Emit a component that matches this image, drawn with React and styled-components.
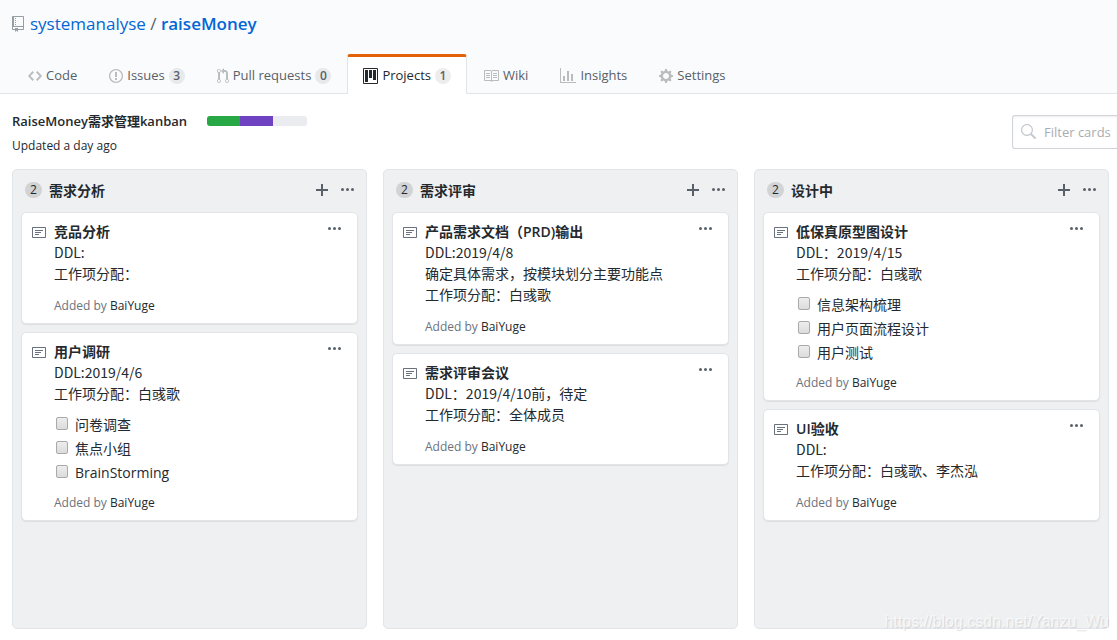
import React, { useState } from 'react';
import styled, { createGlobalStyle } from 'styled-components';

const icons = {
  repo: { width: 12, path: 'M4 9H3V8h1v1zm0-3H3v1h1V6zm0-2H3v1h1V4zm0-2H3v1h1V2zm8-1v12c0 .55-.45 1-1 1H6v2l-1.5-1.5L3 16v-2H1c-.55 0-1-.45-1-1V1c0-.55.45-1 1-1h10c.55 0 1 .45 1 1zm-1 10H1v2h2v-1h3v1h5v-2zm0-10H2v9h9V1z' },
  code: { width: 14, path: 'M9.5 3L8 4.5 11.5 8 8 11.5 9.5 13 14 8 9.5 3zm-5 0L0 8l4.5 5L6 11.5 2.5 8 6 4.5 4.5 3z' },
  issue: { width: 14, path: 'M7 2.3c3.14 0 5.7 2.56 5.7 5.7s-2.56 5.7-5.7 5.7A5.71 5.71 0 0 1 1.3 8c0-3.14 2.56-5.7 5.7-5.7zM7 1C3.14 1 0 4.14 0 8s3.14 7 7 7 7-3.14 7-7-3.14-7-7-7zm1 3H6v5h2V4zm0 6H6v2h2v-2z' },
  pull: { width: 12, path: 'M11 11.28V5c-.03-.78-.34-1.47-.94-2.06C9.46 2.35 8.78 2.03 8 2H7V0L4 3l3 3V4h1c.27.02.48.11.69.31.21.2.3.42.31.69v6.28A1.993 1.993 0 0 0 10 15a1.993 1.993 0 0 0 1-3.72zm-1 2.92c-.66 0-1.2-.55-1.2-1.2 0-.65.55-1.2 1.2-1.2.65 0 1.2.55 1.2 1.2 0 .65-.55 1.2-1.2 1.2zM4 3c0-1.11-.89-2-2-2a1.993 1.993 0 0 0-1 3.72v6.56A1.993 1.993 0 0 0 2 15a1.993 1.993 0 0 0 1-3.72V4.72c.59-.34 1-.98 1-1.72zm-.8 10c0 .66-.55 1.2-1.2 1.2-.65 0-1.2-.55-1.2-1.2 0-.65.55-1.2 1.2-1.2.65 0 1.2.55 1.2 1.2zM2 4.2C1.34 4.2.8 3.65.8 3c0-.65.55-1.2 1.2-1.2.65 0 1.2.55 1.2 1.2 0 .65-.55 1.2-1.2 1.2z' },
  project: { width: 15, path: 'M10 12h3V2h-3v10zm-4-2h3V2H6v8zm-4 4h3V2H2v12zm-1 1h13V1H1v14zM14 0H1a1 1 0 0 0-1 1v14a1 1 0 0 0 1 1h13a1 1 0 0 0 1-1V1a1 1 0 0 0-1-1z' },
  book: { width: 16, path: 'M3 5h4v1H3V5zm0 3h4V7H3v1zm0 2h4V9H3v1zm11-5h-4v1h4V5zm0 2h-4v1h4V7zm0 2h-4v1h4V9zm2-6v9c0 .55-.45 1-1 1H9.5l-1 1-1-1H2c-.55 0-1-.45-1-1V3c0-.55.45-1 1-1h5.5l1 1 1-1H15c.55 0 1 .45 1 1zm-8 .5L7.5 3H2v9h6V3.5zm7-.5H9.5l-.5.5V12h6V3z' },
  graph: { width: 16, path: 'M16 14v1H0V0h1v14h15zM5 13H3V8h2v5zm4 0H7V3h2v10zm4 0h-2V6h2v7z' },
  gear: { width: 14, path: 'M14 8.77v-1.6l-1.94-.64-.45-1.09.88-1.84-1.13-1.13-1.81.91-1.09-.45-.69-1.92h-1.6l-.63 1.94-1.11.45-1.84-.88-1.13 1.13.91 1.81-.45 1.09L0 7.23v1.59l1.94.64.45 1.09-.88 1.84 1.13 1.13 1.81-.91 1.09.45.69 1.92h1.59l.63-1.94 1.11-.45 1.84.88 1.13-1.13-.92-1.81.47-1.09L14 8.75v.02zM7 11c-1.66 0-3-1.34-3-3s1.34-3 3-3 3 1.34 3 3-1.34 3-3 3z' },
  plus: { width: 12, path: 'M12 9H7v5H5V9H0V7h5V2h2v5h5v2z' },
  dots: { width: 13, path: 'M1.5 9a1.5 1.5 0 1 0 0-3 1.5 1.5 0 0 0 0 3zm5 0a1.5 1.5 0 1 0 0-3 1.5 1.5 0 0 0 0 3zM13 7.5a1.5 1.5 0 1 1-3 0 1.5 1.5 0 0 1 3 0z' },
  note: { width: 14, path: 'M3 10h4V9H3v1zm0-2h6V7H3v1zm0-2h8V5H3v1zm10 6H1V3h12v9zM1 2c-.55 0-1 .45-1 1v9c0 .55.45 1 1 1h12c.55 0 1-.45 1-1V3c0-.55-.45-1-1-1H1z' },
  search: { width: 16, path: 'M15.7 13.3l-3.81-3.83A5.93 5.93 0 0 0 13 6c0-3.31-2.69-6-6-6S1 2.69 1 6s2.69 6 6 6c1.3 0 2.48-.41 3.47-1.11l3.83 3.81c.19.2.45.3.7.3.25 0 .52-.09.7-.3a.996.996 0 0 0 0-1.41v.01zM7 10.7c-2.59 0-4.7-2.11-4.7-4.7 0-2.59 2.11-4.7 4.7-4.7 2.59 0 4.7 2.11 4.7 4.7 0 2.59-2.11 4.7-4.7 4.7z' },
};

const Icon = ({ name }) => (
  <IconSvg width={icons[name].width} height="16" viewBox={`0 0 ${icons[name].width} 16`} aria-hidden="true">
    <path fillRule="evenodd" d={icons[name].path} />
  </IconSvg>
);

const tabs = [
  { icon: 'code', label: 'Code' },
  { icon: 'issue', label: 'Issues', count: 3 },
  { icon: 'pull', label: 'Pull requests', count: 0 },
  { icon: 'project', label: 'Projects', count: 1, active: true },
  { icon: 'book', label: 'Wiki' },
  { icon: 'graph', label: 'Insights' },
  { icon: 'gear', label: 'Settings' },
];

const columns = [
  {
    title: '需求分析',
    cards: [
      { title: '竞品分析', lines: ['DDL:', '工作项分配：'] },
      {
        title: '用户调研',
        lines: ['DDL:2019/4/6', '工作项分配：白彧歌'],
        tasks: ['问卷调查', '焦点小组', 'BrainStorming'],
      },
    ],
  },
  {
    title: '需求评审',
    cards: [
      {
        title: '产品需求文档（PRD)输出',
        lines: ['DDL:2019/4/8', '确定具体需求，按模块划分主要功能点', '工作项分配：白彧歌'],
      },
      { title: '需求评审会议', lines: ['DDL：2019/4/10前，待定', '工作项分配：全体成员'] },
    ],
  },
  {
    title: '设计中',
    cards: [
      {
        title: '低保真原型图设计',
        lines: ['DDL：2019/4/15', '工作项分配：白彧歌'],
        tasks: ['信息架构梳理', '用户页面流程设计', '用户测试'],
      },
      { title: 'UI验收', lines: ['DDL:', '工作项分配：白彧歌、李杰泓'] },
    ],
  },
];

const Card = ({ card }) => {
  const [done, setDone] = useState({});

  return (
    <CardBox>
      <NoteIcon><Icon name="note" /></NoteIcon>
      <CardBody>
        <CardTitle>{card.title}</CardTitle>
        {card.lines.map((line) => <CardLine key={line}>{line}</CardLine>)}
        {card.tasks && (
          <TaskList>
            {card.tasks.map((task) => (
              <li key={task}>
                <Task>
                  <Checkbox
                    checked={!!done[task]}
                    onChange={() => setDone({ ...done, [task]: !done[task] })}
                  />
                  {task}
                </Task>
              </li>
            ))}
          </TaskList>
        )}
        <AddedBy $spaced={!card.tasks}>
          Added by <a href="#BaiYuge">BaiYuge</a>
        </AddedBy>
      </CardBody>
      <IconButton type="button" aria-label="Card menu"><Icon name="dots" /></IconButton>
    </CardBox>
  );
};

const App = () => {
  const [filter, setFilter] = useState('');

  return (
    <Page>
      <GlobalStyle />
      <Header>
        <RepoTitle>
          <Icon name="repo" />
          <RepoName>
            <a href="#owner">systemanalyse</a> / <a href="#repo"><strong>raiseMoney</strong></a>
          </RepoName>
        </RepoTitle>
        <Tabs>
          {tabs.map((tab) => (
            <Tab key={tab.label} href={`#${tab.icon}`} $active={tab.active}>
              <Icon name={tab.icon} />
              {tab.label}
              {tab.count !== undefined && <Counter>{tab.count}</Counter>}
            </Tab>
          ))}
        </Tabs>
      </Header>
      <ProjectHeader>
        <div>
          <ProjectTitle>
            RaiseMoney需求管理kanban
            <Progress>
              <Segment $color="#28a745" />
              <Segment $color="#6f42c1" />
            </Progress>
          </ProjectTitle>
          <Updated>Updated a day ago</Updated>
        </div>
        <Filter>
          <Icon name="search" />
          <input
            type="text"
            aria-label="Filter cards"
            placeholder="Filter cards"
            value={filter}
            onChange={(e) => setFilter(e.target.value)}
          />
        </Filter>
      </ProjectHeader>
      <Board>
        {columns.map((column) => (
          <Column key={column.title}>
            <ColumnHeader>
              <ColumnCounter>{column.cards.length}</ColumnCounter>
              <ColumnTitle>{column.title}</ColumnTitle>
              <IconButton type="button" aria-label="Add a note"><Icon name="plus" /></IconButton>
              <IconButton type="button" aria-label="Column menu"><Icon name="dots" /></IconButton>
            </ColumnHeader>
            <Cards>
              {column.cards.map((card) => <Card key={card.title} card={card} />)}
            </Cards>
          </Column>
        ))}
      </Board>
      <Watermark>https://blog.csdn.net/Yanzu_Wu</Watermark>
    </Page>
  );
};

export default App;

const GlobalStyle = createGlobalStyle`
  * {
    box-sizing: border-box;
  }

  body {
    margin: 0;
    color: #24292e;
    background-color: #ffffff;
    font-family: 'Open Sans', 'Noto Sans CJK SC', sans-serif;
    font-size: 14px;
    line-height: 21px;
  }

  a {
    color: inherit;
    text-decoration: none;
  }
`;

const IconSvg = styled.svg`
  display: block;
  flex-shrink: 0;
  fill: currentColor;
`;

const Page = styled.div`
  position: relative;
  display: flex;
  flex-direction: column;
  min-height: 100vh;
`;

const Header = styled.header`
  padding: 10px 12px 0;
  background-color: #fafbfc;
  border-bottom: 1px solid #e1e4e8;
`;

const RepoTitle = styled.div`
  display: flex;
  align-items: center;
  gap: 6px;
  color: #959da5;
`;

const RepoName = styled.h1`
  margin: 0;
  color: #586069;
  font-size: 17px;
  font-weight: 400;
  line-height: 28px;

  a {
    color: #0366d6;
  }

  strong {
    font-weight: 600;
  }
`;

const Tabs = styled.nav`
  display: flex;
  margin-top: 16px;
  margin-bottom: -1px;
`;

const Tab = styled.a`
  display: flex;
  align-items: center;
  gap: 4px;
  height: 40px;
  padding: 0 15px;
  color: ${props => (props.$active ? '#24292e' : '#586069')};
  background-color: ${props => (props.$active ? '#ffffff' : 'transparent')};
  border: 1px solid ${props => (props.$active ? '#e1e4e8' : 'transparent')};
  border-top: 3px solid ${props => (props.$active ? '#e36209' : 'transparent')};
  border-bottom: 0;
  border-radius: 3px 3px 0 0;
  font-size: 13px;
  white-space: nowrap;

  svg {
    color: ${props => (props.$active ? '#24292e' : '#babdc0')};
  }
`;

const Counter = styled.span`
  min-width: 16px;
  padding: 0 4px;
  color: #586069;
  background-color: rgba(27, 31, 35, 0.08);
  border-radius: 20px;
  font-size: 12px;
  font-weight: 600;
  line-height: 16px;
  text-align: center;
`;

const ProjectHeader = styled.div`
  display: flex;
  justify-content: space-between;
  align-items: center;
  padding: 16px 0 14px 12px;
`;

const ProjectTitle = styled.h2`
  display: flex;
  align-items: center;
  gap: 20px;
  margin: 0;
  font-size: 13px;
  font-weight: 600;
  line-height: 22px;
`;

const Progress = styled.span`
  display: flex;
  width: 100px;
  height: 10px;
  overflow: hidden;
  background-color: #eaecef;
  border-radius: 3px;
`;

const Segment = styled.span`
  width: 33%;
  background-color: ${props => props.$color};
`;

const Updated = styled.p`
  margin: 5px 0 0;
  font-size: 12px;
  line-height: 18px;
`;

const Filter = styled.label`
  display: flex;
  align-items: center;
  gap: 8px;
  width: 105px;
  height: 34px;
  margin-bottom: 2px;
  padding-left: 7px;
  color: #c6cbd1;
  border: 1px solid #d1d5da;
  border-right: 0;
  border-radius: 3px 0 0 3px;
  box-shadow: inset 0 1px 2px rgba(27, 31, 35, 0.075);

  input {
    flex: 1;
    min-width: 0;
    padding: 0;
    color: #24292e;
    background: none;
    border: 0;
    outline: none;
    font-family: inherit;
    font-size: 13px;
  }

  input::placeholder {
    color: #a9adb2;
  }
`;

const Board = styled.main`
  display: flex;
  flex: 1;
  gap: 16px;
  padding: 0 8px 11px 12px;
`;

const Column = styled.section`
  flex: 1;
  min-width: 300px;
  background-color: #eff0f2;
  border: 1px solid #e1e4e8;
  border-radius: 5px;
`;

const ColumnHeader = styled.div`
  display: flex;
  align-items: center;
  gap: 13px;
  height: 40px;
  padding: 0 12px;
`;

const ColumnCounter = styled(Counter)`
  min-width: 17px;
  margin-right: -6px;
  color: #24292e;
  background-color: #d1d3d5;
  font-weight: 400;
`;

const ColumnTitle = styled.h3`
  flex: 1;
  margin: 0;
  font-size: 14px;
  font-weight: 600;
`;

const IconButton = styled.button`
  padding: 0;
  color: #586069;
  background: none;
  border: 0;
  cursor: pointer;
`;

const Cards = styled.div`
  display: flex;
  flex-direction: column;
  gap: 8px;
  padding: 2px 8px 8px;
`;

const CardBox = styled.article`
  display: flex;
  align-items: flex-start;
  gap: 8px;
  padding: 8px 16px 8px 10px;
  background-color: #ffffff;
  border: 1px solid #e1e4e8;
  border-radius: 5px;
  box-shadow: 0 1px 1px rgba(27, 31, 35, 0.08);
`;

const NoteIcon = styled.span`
  padding-top: 4px;
  color: #6a737d;
`;

const CardBody = styled.div`
  flex: 1;
  min-width: 0;
`;

const CardTitle = styled.h4`
  margin: 0;
  font-size: 14px;
  font-weight: 600;
`;

const CardLine = styled.p`
  margin: 0;
  font-family: 'Noto Sans CJK SC', sans-serif;
`;

const TaskList = styled.ul`
  display: flex;
  flex-direction: column;
  gap: 3px;
  margin: 10px 0 11px;
  padding: 0 2px;
  list-style: none;
`;

const Task = styled.label`
  display: flex;
  align-items: center;
  gap: 7px;
`;

const Checkbox = styled.input.attrs({ type: 'checkbox' })`
  appearance: none;
  width: 12px;
  height: 13px;
  margin: 0 0 2px;
  background: linear-gradient(#ededed, #dcdcdc);
  border: 1px solid #a9a9a9;
  border-radius: 2px;

  &:checked {
    background: #0366d6;
  }
`;

const AddedBy = styled.p`
  margin: ${props => (props.$spaced ? '13px 0 0' : '0')};
  color: #6a737d;
  font-size: 12px;
  line-height: 18px;

  a {
    color: #24292e;
  }
`;

const Watermark = styled.span`
  position: absolute;
  right: 8px;
  bottom: 8px;
  color: rgba(255, 255, 255, 0.7);
  font-family: 'Liberation Sans', sans-serif;
  font-size: 16px;
  text-shadow: 1px 1px 1px rgba(0, 0, 0, 0.12);
  pointer-events: none;
`;
